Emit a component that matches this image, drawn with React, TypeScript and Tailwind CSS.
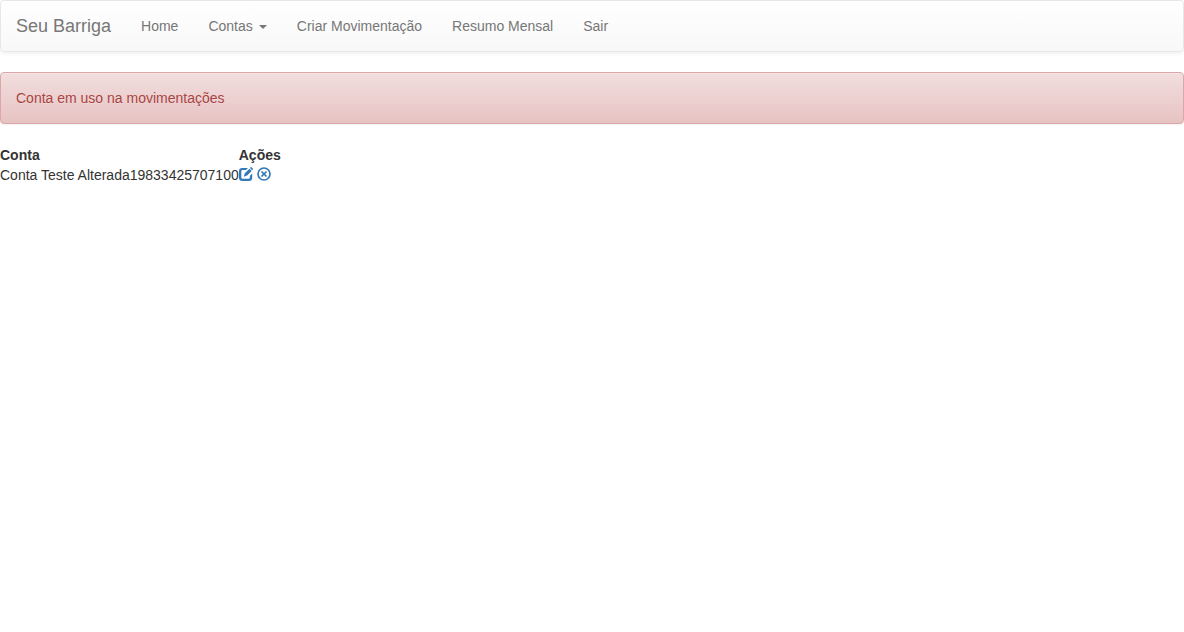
import React from 'react';

const navLink = 'flex items-center px-[15px] py-[15px] text-[#777] [text-shadow:0_1px_0_rgba(255,255,255,0.25)] hover:text-[#333]';

function EditIcon() {
  return (
    <svg viewBox="0 0 14 14" className="h-[14px] w-[14px]" aria-hidden="true">
      <path d="M9 .9L7 3.100H3.600Q2.300 3.100 2.300 4.400v6Q2.300 11.700 3.600 11.700h6q1.300 0 1.300-1.300V8.800l2.300-2.300v4.200Q13.200 14 9.900 14H3.300Q0 14 0 10.700V4.200Q0 .9 3.300.9z" fill="currentColor" />
      <path d="M4.800 9.700l1-3.400L10.400 1.700l2.300 2.300-4.600 4.600zM11 1.100l.7-.8q.4-.4.8 0l1.300 1.300q.4.4 0 .8l-.7.800z" fill="currentColor" />
    </svg>
  );
}

function RemoveIcon() {
  return (
    <svg viewBox="0 0 14 14" className="h-[14px] w-[14px]" aria-hidden="true">
      <circle cx="7" cy="7" r="6" fill="none" stroke="currentColor" strokeWidth="1.700" />
      <path d="M4.500 4.500l5 5M9.500 4.500l-5 5" stroke="currentColor" strokeWidth="1.700" />
    </svg>
  );
}

export default function App() {
  return (
    <div className="bg-white font-['Liberation_Sans',Arial,sans-serif] text-[14px] leading-[20px] text-[#333]">
      <nav className="mb-5 flex min-h-[52px] flex-wrap rounded-[4px] border border-[#e7e7e7] bg-linear-to-b from-white to-[#f8f8f8] shadow-[inset_0_1px_0_rgba(255,255,255,0.15),0_1px_5px_rgba(0,0,0,0.075)]">
        <a href="#" className="px-[15px] py-[15px] text-[18px] text-[#777] [text-shadow:0_1px_0_rgba(255,255,255,0.25)]">Seu Barriga</a>
        <ul className="flex flex-wrap">
          <li><a href="#" className={navLink}>Home</a></li>
          <li>
            <button type="button" className={navLink}>
              Contas
              <span className="mt-[2px] ml-[6px] border-x-4 border-t-4 border-x-transparent border-t-[#777]" />
            </button>
          </li>
          <li><a href="#" className={navLink}>Criar Movimentação</a></li>
          <li><a href="#" className={navLink}>Resumo Mensal</a></li>
          <li><a href="#" className={navLink}>Sair</a></li>
        </ul>
      </nav>
      <div role="alert" className="mb-[21px] rounded-[4px] border border-[#dca7a7] bg-linear-to-b from-[#f2dede] to-[#e7c3c3] p-[15px] text-[#a94442] shadow-[inset_0_1px_0_rgba(255,255,255,0.25),0_1px_2px_rgba(0,0,0,0.05)] [text-shadow:0_1px_0_rgba(255,255,255,0.2)]">
        Conta em uso na movimentações
      </div>
      <table className="border-collapse">
        <thead>
          <tr className="text-left">
            <th className="p-0 font-bold">Conta</th>
            <th className="p-0 font-bold">Ações</th>
          </tr>
        </thead>
        <tbody>
          <tr>
            <td className="p-0">Conta Teste Alterada19833425707100</td>
            <td className="p-0">
              <div className="flex gap-1 pb-[2px] text-[#337ab7]">
                <a href="#" aria-label="Editar"><EditIcon /></a>
                <a href="#" aria-label="Remover"><RemoveIcon /></a>
              </div>
            </td>
          </tr>
        </tbody>
      </table>
    </div>
  );
}
